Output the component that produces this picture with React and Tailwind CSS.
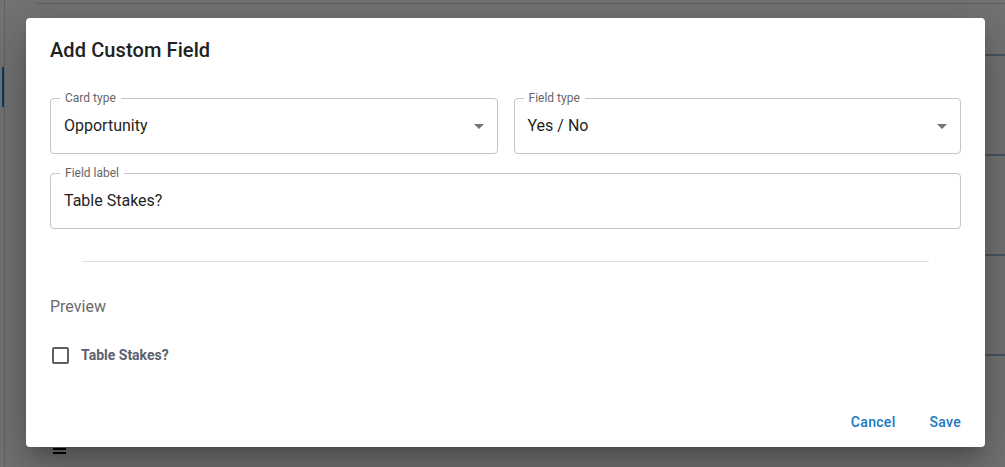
import React from 'react';

const Caret = () => (
  <svg width="10" height="5" viewBox="0 0 10 5" className="text-[#757575]">
    <path d="M0 0 L10 0 L5 5 Z" fill="currentColor" />
  </svg>
);

const OutlinedField = ({ label, value, select, className }) => (
  <div className={`relative h-14 rounded-[4px] border border-[#c4c4c4] flex items-center pl-[13px] pr-[13px] ${className || ''}`}>
    <span className="absolute -top-[9px] left-[9px] bg-white px-[5px] text-[12px] leading-4 text-[#666666]">{label}</span>
    <span className="flex-1 text-[16px] text-[#1f1f1f]">{value}</span>
    {select && <Caret />}
  </div>
);

const App = () => {
  return (
    <div className="relative w-[1005px] h-[467px] overflow-hidden bg-[#f4f4f4]" style={{ fontFamily: 'Roboto, "Liberation Sans", sans-serif' }}>
      {/* page behind the dialog */}
      <div className="absolute left-[4px] top-0 bottom-0 w-px bg-[#d0d0d0]" />
      <div className="absolute left-[2px] top-[67px] h-[40px] w-[2px] bg-[#167ecc]" />
      <div className="absolute left-[37px] right-0 top-[3px] h-px bg-[#cccccc]" />
      <div className="absolute left-[75px] top-[14px] text-[14px] text-[#333] whitespace-nowrap">
        Card type settings and custom fields for this board are listed below
      </div>
      <div className="absolute right-0 top-[54px] w-[20px] h-[2px] bg-[#95b8d2]" />
      <div className="absolute right-0 top-[154px] w-[20px] h-[2px] bg-[#95b8d2]" />
      <div className="absolute right-0 top-[254px] w-[20px] h-[2px] bg-[#95b8d2]" />
      <div className="absolute right-0 top-[354px] w-[20px] h-[2px] bg-[#95b8d2]" />
      <div className="absolute left-[53px] top-[448px] w-[13px] flex flex-col gap-[2px]">
        <div className="h-[2px] bg-black" />
        <div className="h-[2px] bg-black" />
      </div>

      {/* backdrop */}
      <div className="absolute inset-0 bg-black/[0.53]" />

      {/* dialog */}
      <div className="absolute left-[26px] top-[18px] w-[959px] h-[429px] rounded-[4px] bg-white shadow-[0_11px_15px_-7px_rgba(0,0,0,0.2),0_24px_38px_3px_rgba(0,0,0,0.14),0_9px_46px_8px_rgba(0,0,0,0.12)] flex flex-col">
        <h2 className="px-6 pt-4 text-[20px] leading-8 font-medium text-[#212121] tracking-[0.1px]">Add Custom Field</h2>
        <div className="px-6 mt-8">
          <div className="flex gap-4">
            <OutlinedField label="Card type" value="Opportunity" select className="flex-1" />
            <OutlinedField label="Field type" value="Yes / No" select className="flex-1" />
          </div>
          <OutlinedField label="Field label" value="Table Stakes?" className="mt-[19px]" />
          <div className="mx-8 mt-8 h-px bg-[#e0e0e0]" />
          <div className="mt-[33px] text-[16px] leading-6 text-[#6b6b6b]">Preview</div>
          <label className="mt-[24px] flex items-center h-6">
            <span className="ml-[2px] w-[17px] h-[17px] rounded-[2px] border-2 border-[#5f5f5f]" />
            <span className="ml-[12px] text-[14px] font-bold text-[#5b6170]">Table Stakes?</span>
          </label>
        </div>
        <div className="mt-[37px] flex justify-end items-center pr-[16px] gap-[18px]">
          <button className="h-9 px-2 text-[14px] font-medium text-[#1a78c2] tracking-[0.3px]">Cancel</button>
          <button className="h-9 px-2 text-[14px] font-medium text-[#1a78c2] tracking-[0.3px]">Save</button>
        </div>
      </div>
    </div>
  );
};

export default App;
